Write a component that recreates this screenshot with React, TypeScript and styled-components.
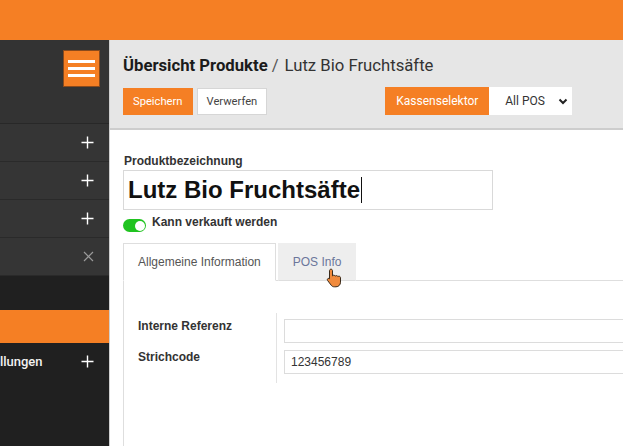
import styled, { createGlobalStyle } from "styled-components";

const GlobalStyle = createGlobalStyle`
    html, body {
        margin: 0;
        padding: 0;
        overflow: hidden;
    }
    * {
        box-sizing: border-box;
    }
`;

const orange = "#f57f24";

const Page = styled.div`
    display: flex;
    flex-direction: column;
    height: 446px;
    width: 623px;
    font-family: Roboto, "Liberation Sans", sans-serif;
`;

const TopBar = styled.div`
    height: 40px;
    flex-shrink: 0;
    background-color: ${orange};
`;

const Body = styled.div`
    flex: 1;
    display: flex;
    min-height: 0;
`;

const Sidebar = styled.aside`
    width: 109px;
    flex-shrink: 0;
    background-color: #202020;
    display: flex;
    justify-content: flex-end;
    overflow: hidden;
`;

const SidePanel = styled.div`
    width: 161px;
    flex-shrink: 0;
    display: flex;
    flex-direction: column;
`;

const SideHead = styled.div`
    height: 84px;
    background-color: #333;
    display: flex;
    justify-content: flex-end;
    align-items: flex-start;
    padding: 10px 9px 0 0;
    border-bottom: 1px solid #282828;
`;

const MenuButton = styled.button`
    width: 37px;
    height: 37px;
    background-color: ${orange};
    border: 1px solid #8a4a1c;
    padding: 0;
    display: flex;
    flex-direction: column;
    justify-content: center;
    align-items: center;
    gap: 4px;

    span {
        display: block;
        width: 27px;
        height: 3px;
        background-color: #fff;
    }
`;

const NavRow = styled.div<{ $dark?: boolean }>`
    height: 38px;
    display: flex;
    align-items: center;
    justify-content: space-between;
    padding: 0 15px 0 16px;
    background-color: ${(p) => (p.$dark ? "#202020" : "#353535")};
    border-bottom: 1px solid ${(p) => (p.$dark ? "#202020" : "#2a2a2a")};
    color: #f2f2f2;
    font-size: 13px;
    font-weight: 500;
    white-space: nowrap;
`;

const NavIcon = styled.span<{ $muted?: boolean }>`
    display: flex;
    color: ${(p) => (p.$muted ? "#9a9a9a" : "#ffffff")};
`;

const SideGap = styled.div`
    height: 34px;
    background-color: #202020;
`;

const SideAccent = styled.div`
    height: 33px;
    background-color: ${orange};
`;

const Main = styled.main`
    flex: 1;
    display: flex;
    flex-direction: column;
    border-left: 1px solid #cfcfcf;
    background-color: #fff;
    min-width: 0;
`;

const Header = styled.header`
    height: 90px;
    flex-shrink: 0;
    background-color: #e6e6e6;
    border-bottom: 2px solid #cdcdcd;
    padding: 12px 13px 0;
`;

const Title = styled.h1`
    margin: 0;
    font-size: 16.7px;
    line-height: 28px;
    font-weight: 700;
    color: #1b1b1b;

    span {
        font-weight: 400;
        color: #333;
    }

    .sep {
        color: #555;
        margin: 0 6px 0 4px;
    }
`;

const Toolbar = styled.div`
    display: flex;
    align-items: center;
    margin-top: 7px;
`;

const Button = styled.button<{ $primary?: boolean }>`
    height: 27px;
    padding: 0 9px;
    font-family: Roboto, sans-serif;
    font-size: 11.2px;
    border: 1px solid ${(p) => (p.$primary ? orange : "#d6d6d6")};
    background-color: ${(p) => (p.$primary ? orange : "#fff")};
    color: ${(p) => (p.$primary ? "#fff" : "#444")};
    margin-right: 4px;
`;

const Selector = styled.div`
    display: flex;
    height: 28px;
    margin-left: 114px;
`;

const SelectorLabel = styled.div`
    background-color: ${orange};
    color: #fff;
    font-size: 12px;
    display: flex;
    align-items: center;
    padding: 0 11px;
    width: 104px;
`;

const SelectBox = styled.div`
    width: 83px;
    background-color: #fff;
    color: #333;
    font-size: 12px;
    display: flex;
    align-items: center;
    justify-content: space-between;
    padding: 0 3px 0 16px;
`;

const Content = styled.section`
    flex: 1;
    padding: 23px 0 0 13px;
    font-family: "Liberation Sans", Arial, sans-serif;
    display: flex;
    flex-direction: column;
`;

const FieldLabel = styled.label`
    display: block;
    font-size: 12px;
    font-weight: 700;
    color: #333;
    line-height: 16px;
    padding-left: 1px;
`;

const NameInput = styled.div`
    width: 370px;
    height: 40px;
    margin-top: 1px;
    border: 1px solid #d9d9d9;
    display: flex;
    align-items: center;
    padding-left: 4px;
    font-size: 24px;
    font-weight: 700;
    color: #111;

    .caret {
        display: inline-block;
        width: 1px;
        height: 26px;
        background-color: #111;
        margin-left: 1px;
    }
`;

const ToggleRow = styled.div`
    display: flex;
    align-items: flex-start;
    gap: 5px;
    margin-top: 4px;
`;

const Toggle = styled.span`
    width: 23px;
    height: 13px;
    margin-top: 5px;
    border-radius: 7px;
    background-color: #20c320;
    display: flex;
    justify-content: flex-end;
    align-items: center;
    padding: 1.5px;

    &::after {
        content: "";
        width: 10px;
        height: 10px;
        border-radius: 50%;
        background-color: #fff;
    }
`;

const TabBar = styled.div`
    display: flex;
    margin-top: 11px;
    border-bottom: 1px solid #dedede;
    height: 38px;
`;

const Tab = styled.div<{ $active?: boolean }>`
    position: relative;
    display: flex;
    align-items: center;
    padding: 0 14px;
    font-size: 12px;
    margin-right: 2px;
    margin-bottom: -1px;
    color: ${(p) => (p.$active ? "#555" : "#6b769b")};
    background-color: ${(p) => (p.$active ? "#fff" : "#eeeeee")};
    border: 1px solid ${(p) => (p.$active ? "#dedede" : "#eeeeee")};
    border-bottom: ${(p) => (p.$active ? "1px solid #fff" : "1px solid #dedede")};
`;

const Cursor = styled.svg`
    position: absolute;
    left: 47px;
    top: 24px;
`;

const TabPanel = styled.div`
    flex: 1;
    border-left: 1px solid #dedede;
    padding: 32px 0 0 14px;
`;

const FieldGrid = styled.div`
    display: grid;
    grid-template-columns: 139px 1fr;
    margin-right: -20px;
`;

const LabelCol = styled.div`
    display: flex;
    flex-direction: column;
    gap: 15px;
    padding-top: 5px;
    border-right: 1px solid #e3e3e3;
    height: 70px;

    label {
        font-size: 12px;
        font-weight: 700;
        color: #333;
        line-height: 16px;
    }
`;

const InputCol = styled.div`
    display: flex;
    flex-direction: column;
    gap: 7px;
    padding: 6px 0 0 7px;
`;

const TextInput = styled.div`
    height: 24px;
    border: 1px solid #dcdcdc;
    display: flex;
    align-items: center;
    padding-left: 6px;
    font-size: 12px;
    color: #333;
`;

const Plus = () => (
    <svg width="13" height="13" viewBox="0 0 13 13">
        <path d="M6.5 0.5v12M0.5 6.5h12" stroke="currentColor" strokeWidth="1.4" />
    </svg>
);

const Cross = () => (
    <svg width="11" height="11" viewBox="0 0 11 11">
        <path d="M1 1l9 9M10 1l-9 9" stroke="currentColor" strokeWidth="1.2" />
    </svg>
);

const Chevron = () => (
    <svg width="12" height="12" viewBox="0 0 12 12">
        <path d="M2.5 4.5l3.5 3.5 3.5-3.5" fill="none" stroke="#222" strokeWidth="2" />
    </svg>
);

export default function App() {
    return (
        <>
            <GlobalStyle />
            <Page>
                <TopBar />
                <Body>
                    <Sidebar>
                        <SidePanel>
                            <SideHead>
                                <MenuButton>
                                    <span />
                                    <span />
                                    <span />
                                </MenuButton>
                            </SideHead>
                            <NavRow>
                                <span />
                                <NavIcon>
                                    <Plus />
                                </NavIcon>
                            </NavRow>
                            <NavRow>
                                <span />
                                <NavIcon>
                                    <Plus />
                                </NavIcon>
                            </NavRow>
                            <NavRow>
                                <span />
                                <NavIcon>
                                    <Plus />
                                </NavIcon>
                            </NavRow>
                            <NavRow>
                                <span />
                                <NavIcon $muted>
                                    <Cross />
                                </NavIcon>
                            </NavRow>
                            <SideGap />
                            <SideAccent />
                            <NavRow $dark>
                                <span>Einstellungen</span>
                                <NavIcon>
                                    <Plus />
                                </NavIcon>
                            </NavRow>
                        </SidePanel>
                    </Sidebar>
                    <Main>
                        <Header>
                            <Title>
                                Übersicht Produkte
                                <span className="sep">/</span>
                                <span>Lutz Bio Fruchtsäfte</span>
                            </Title>
                            <Toolbar>
                                <Button $primary>Speichern</Button>
                                <Button>Verwerfen</Button>
                                <Selector>
                                    <SelectorLabel>Kassenselektor</SelectorLabel>
                                    <SelectBox>
                                        All POS
                                        <Chevron />
                                    </SelectBox>
                                </Selector>
                            </Toolbar>
                        </Header>
                        <Content>
                            <FieldLabel>Produktbezeichnung</FieldLabel>
                            <NameInput>
                                Lutz Bio Fruchtsäfte
                                <span className="caret" />
                            </NameInput>
                            <ToggleRow>
                                <Toggle />
                                <FieldLabel>Kann verkauft werden</FieldLabel>
                            </ToggleRow>
                            <TabBar>
                                <Tab $active>Allgemeine Information</Tab>
                                <Tab>
                                    POS Info
                                    <Cursor width="17" height="20" viewBox="0 0 17 20">
                                        <path
                                            d="M5 1.2c.9 0 1.5.6 1.5 1.5v5.2c.3-.5.8-.7 1.3-.7.7 0 1.2.4 1.4 1 .3-.4.8-.6 1.3-.6.7 0 1.2.4 1.4 1 .3-.3.7-.4 1.1-.4.9 0 1.5.7 1.5 1.6v4.4c0 2.6-1.9 4.6-4.5 4.6H8.3c-1.4 0-2.4-.6-3.2-1.7L1.6 12.5c-.5-.7-.3-1.5.3-1.9.6-.4 1.3-.3 1.8.2l-.2-.2V2.7c0-.9.6-1.5 1.5-1.5z"
                                            fill="#f08a3c"
                                            stroke="#3a2a1a"
                                            strokeWidth="1"
                                        />
                                    </Cursor>
                                </Tab>
                            </TabBar>
                            <TabPanel>
                                <FieldGrid>
                                    <LabelCol>
                                        <label>Interne Referenz</label>
                                        <label>Strichcode</label>
                                    </LabelCol>
                                    <InputCol>
                                        <TextInput />
                                        <TextInput>123456789</TextInput>
                                    </InputCol>
                                </FieldGrid>
                            </TabPanel>
                        </Content>
                    </Main>
                </Body>
            </Page>
        </>
    );
}
